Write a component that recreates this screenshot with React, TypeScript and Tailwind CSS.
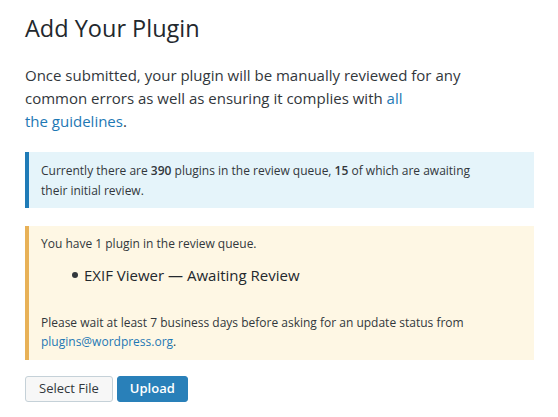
export default function App() {
  return (
    <div
      className="min-h-screen bg-white pl-[25px] pr-[24px] text-[#32373c]"
      style={{ fontFamily: '"Open Sans", "Noto Sans", sans-serif' }}
    >
      <h1 className="pt-3 text-[23.5px] leading-[32px] font-normal text-[#23282d]">Add Your Plugin</h1>

      <p className="mt-5 text-[15px] leading-[23px] text-[#32373c]">
        Once submitted, your plugin will be manually reviewed for any
        <br />
        common errors as well as ensuring it complies with{" "}
        <a href="#" className="text-[#1e78b4]">
          all
          <br />
          the guidelines
        </a>
        .
      </p>

      <div className="mt-[19px] border-l-4 border-[#1f7bb7] bg-[#e5f4fa] pl-3 pt-[9px] pb-[8px] text-[12px] leading-[19.5px]">
        <p>
          Currently there are <strong className="font-semibold">390</strong> plugins in the review queue,{" "}
          <strong className="font-semibold">15</strong> of which are awaiting
          <br />
          their initial review.
        </p>
      </div>

      <div className="mt-[18px] border-l-4 border-[#e8b157] bg-[#fef7e4] pl-3 pt-2 pb-2 text-[12px] leading-[19.5px]">
        <p>You have 1 plugin in the review queue.</p>
        <ul className="mt-[9px] pl-[31px] text-[15px] leading-[24px] text-[#23282d]">
          <li className="flex items-center">
            <span className="mr-[6px] mt-[1px] h-[6px] w-[6px] rounded-full bg-[#32373c]" />
            EXIF Viewer — Awaiting Review
          </li>
        </ul>
        <p className="mt-[26px]">
          Please wait at least 7 business days before asking for an update status from
          <br />
          <a href="#" className="text-[#1e78b4]">
            plugins@wordpress.org
          </a>
          .
        </p>
      </div>

      <div className="mt-4 flex gap-1">
        <button className="h-[26px] rounded-[3px] border border-[#c5d1d8] bg-[#f7f7f7] px-[13px] text-[13px] text-[#32373c]">
          Select File
        </button>
        <button className="h-[26px] rounded-[3px] border border-[#2980b9] bg-[#2980b9] px-3 text-[13px] font-semibold text-white">
          Upload
        </button>
      </div>
    </div>
  );
}
